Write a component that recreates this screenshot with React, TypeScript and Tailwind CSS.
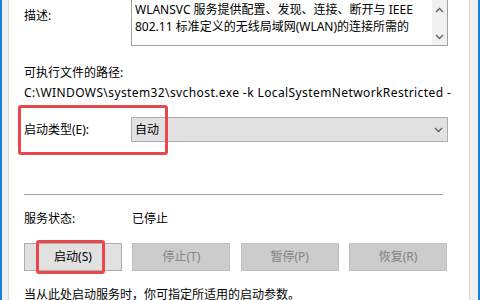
import React from 'react';

const font = { fontFamily: '"Noto Sans", "Noto Sans CJK SC", sans-serif' };

const Chevron = ({ up = false }: { up?: boolean }) => (
  <svg width="9" height="6" viewBox="0 0 9 6" className="block">
    <path
      d={up ? 'M1 5 L4.5 1.5 L8 5' : 'M1 1 L4.5 4.5 L8 1'}
      fill="none"
      stroke="#606060"
      strokeWidth="1.3"
    />
  </svg>
);

const buttons = [
  { label: '启动(S)', enabled: true },
  { label: '停止(T)', enabled: false },
  { label: '暂停(P)', enabled: false },
  { label: '恢复(R)', enabled: false },
];

const App = () => {
  return (
    <div
      className="w-[480px] h-[300px] overflow-hidden bg-[#f0f0f0] border-x-2 border-[#1a7fd4] text-[12px] text-black"
      style={font}
    >
      <div className="ml-[6px] w-[462px] h-full bg-white border-x border-[#d9d9d9] pl-[15px]">
        {/* 描述 */}
        <div className="flex h-[46px]">
          <div className="w-[107px] pt-[7px] leading-[17px]">描述:</div>
          <div className="w-[317px] h-[46px] flex border-x border-b border-[#a0a0a0]">
            <div className="flex-1 pl-[3px] pt-[1px] leading-[17px] overflow-hidden">
              <div className="whitespace-nowrap">WLANSVC 服务提供配置、发现、连接、断开与 IEEE</div>
              <div className="whitespace-nowrap">802.11 标准定义的无线局域网(WLAN)的连接所需的</div>
            </div>
            <div className="w-[15px] bg-[#f0f0f0] flex flex-col items-center justify-between pt-[7px] pb-[5px]">
              <Chevron up />
              <Chevron />
            </div>
          </div>
        </div>

        {/* 路径 */}
        <div className="mt-[18px] leading-[17px]">可执行文件的路径:</div>
        <div className="mt-[3px] leading-[17px] whitespace-nowrap tracking-[0.4px]">
          C:\WINDOWS\system32\svchost.exe -k LocalSystemNetworkRestricted -
        </div>

        {/* 启动类型 */}
        <div className="relative mt-[16px] flex items-center">
          <div className="w-[107px] leading-[17px]">启动类型(E):</div>
          <div className="w-[317px] h-[25px] bg-[#e1e1e1] border border-[#adadad] flex items-center justify-between pl-[3px] pr-[4px]">
            <span className="leading-[17px]">自动</span>
            <Chevron />
          </div>
          <div className="absolute left-[-6px] top-[-12px] w-[150px] h-[50px] border-[3px] border-[#e8474c] rounded-[3px]" />
        </div>

        <div className="mt-[52px] w-[419px] h-px bg-[#a0a0a0]" />

        {/* 服务状态 */}
        <div className="mt-[15px] flex leading-[17px]">
          <div className="w-[108px]">服务状态:</div>
          <div>已停止</div>
        </div>

        <div className="mt-[16px] flex gap-[10px] w-[423px] justify-between">
          {buttons.map((b, i) => (
            <div key={i} className="relative">
              <div
                className={
                  b.enabled
                    ? 'w-[98px] h-[28px] flex items-center justify-center bg-[#e1e1e1] border border-[#adadad] text-black'
                    : 'w-[98px] h-[28px] flex items-center justify-center bg-[#cccccc] border border-[#bfbfbf] text-[#838383]'
                }
              >
                {b.label}
              </div>
              {b.enabled && (
                <div className="absolute left-[12px] top-[-3px] w-[69px] h-[34px] border-[3px] border-[#e8474c] rounded-[3px]" />
              )}
            </div>
          ))}
        </div>

        <div className="mt-[15px] leading-[17px] whitespace-nowrap">
          当从此处启动服务时，你可指定所适用的启动参数。
        </div>
      </div>
    </div>
  );
};

export default App;
